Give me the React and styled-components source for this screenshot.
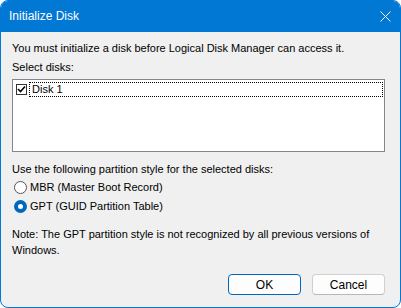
import React from "react";
import styled, { createGlobalStyle } from "styled-components";

const Global = createGlobalStyle`
  html, body { margin: 0; padding: 0; background: #ffffff; }
  body { font-family: "Liberation Sans", Arial, sans-serif; }
`;

const Window = styled.div`
  width: 401px;
  height: 308px;
  box-sizing: border-box;
  border: 1px solid #0078d4;
  border-radius: 8px;
  overflow: hidden;
  background: #f0f0f0;
  display: flex;
  flex-direction: column;
  font-size: 11px;
  color: #000;
`;

const TitleBar = styled.div`
  height: 30px;
  background: #0078d4;
  display: flex;
  align-items: center;
  justify-content: space-between;
  padding: 0 9px 1px 8px;
  color: #fff;
  flex-shrink: 0;
`;

const Title = styled.span`
  font-size: 12px;
`;

const Body = styled.div`
  flex: 1;
  display: flex;
  flex-direction: column;
  padding: 8px 15px 0 11px;
`;

const Text = styled.div`
  line-height: 16px;
  margin-top: ${(p) => p.$mt || 0}px;
`;

const ListBox = styled.div`
  margin-top: 4px;
  height: 73px;
  box-sizing: border-box;
  border: 1px solid #828790;
  background: #fff;
  padding: 1px 1px;
`;

const ListItem = styled.div`
  display: flex;
  align-items: center;
  height: 17px;
  padding-left: 2px;
`;

const CheckBox = styled.span`
  width: 11px;
  height: 11px;
  box-sizing: border-box;
  border: 1px solid #333;
  background: #fff;
  display: flex;
  align-items: center;
  justify-content: center;
  flex-shrink: 0;
`;

const FocusLabel = styled.span`
  flex: 1;
  margin-left: 2px;
  height: 15px;
  box-sizing: border-box;
  border: 1px dotted #000;
  padding-left: 2px;
  line-height: 13px;
`;

const RadioRow = styled.label`
  display: flex;
  align-items: center;
  height: 19px;
  line-height: 13px;
  margin-top: ${(p) => p.$mt || 0}px;
  padding-left: 2px;
`;

const Radio = styled.span`
  width: 13px;
  height: 13px;
  box-sizing: border-box;
  border-radius: 50%;
  border: ${(p) => (p.$on ? "4px solid #0067c0" : "1px solid #555")};
  background: #fff;
  margin-right: 3px;
  flex-shrink: 0;
`;

const Buttons = styled.div`
  margin-top: auto;
  margin-bottom: 12px;
  display: flex;
  justify-content: flex-end;
  gap: 11px;
`;

const Button = styled.button`
  width: 73px;
  height: 21px;
  box-sizing: border-box;
  font-family: inherit;
  font-size: 12px;
  color: #000;
  background: #fdfdfd;
  border: 1px solid ${(p) => (p.$primary ? "#0067c0" : "#d0d0d0")};
  border-bottom-color: ${(p) => (p.$primary ? "#0067c0" : "#b8b8b8")};
  border-radius: 4px;
  padding: 0;
`;

export default function App() {
  return (
    <>
      <Global />
      <Window>
        <TitleBar>
          <Title>Initialize Disk</Title>
          <svg width="11" height="11" viewBox="0 0 11 11">
            <path d="M0.5 0.5 L10.5 10.5 M10.5 0.5 L0.5 10.5" stroke="#fff" strokeWidth="1" />
          </svg>
        </TitleBar>
        <Body>
          <Text>You must initialize a disk before Logical Disk Manager can access it.</Text>
          <Text $mt={3}>Select disks:</Text>
          <ListBox>
            <ListItem>
              <CheckBox>
                <svg width="9" height="9" viewBox="0 0 9 9">
                  <path d="M1 4 L3.5 6.5 L8 1.5" stroke="#000" strokeWidth="1.6" fill="none" />
                </svg>
              </CheckBox>
              <FocusLabel>Disk 1</FocusLabel>
            </ListItem>
          </ListBox>
          <Text $mt={9}>Use the following partition style for the selected disks:</Text>
          <RadioRow $mt={1}>
            <Radio />
            MBR (Master Boot Record)
          </RadioRow>
          <RadioRow>
            <Radio $on />
            GPT (GUID Partition Table)
          </RadioRow>
          <Text $mt={10}>
            Note: The GPT partition style is not recognized by all previous versions of
            Windows.
          </Text>
          <Buttons>
            <Button $primary>OK</Button>
            <Button>Cancel</Button>
          </Buttons>
        </Body>
      </Window>
    </>
  );
}
